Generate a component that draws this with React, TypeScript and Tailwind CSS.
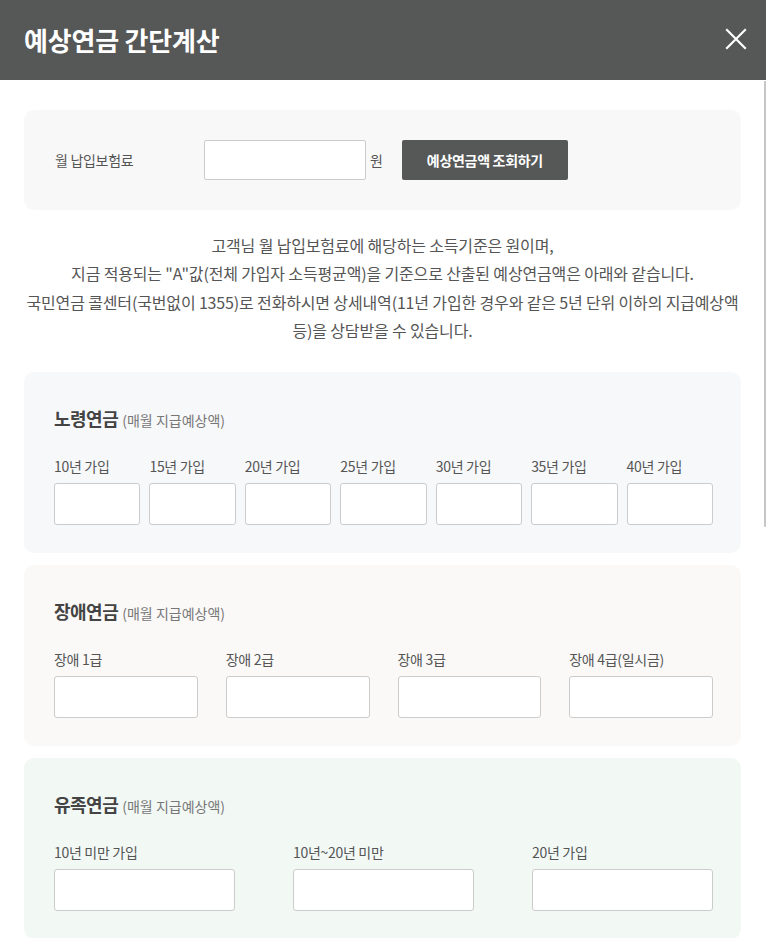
import React from "react";

const font = { fontFamily: '"Noto Sans CJK KR", "Noto Sans", sans-serif' };

function Field({ label }: { label: string }) {
  return (
    <div className="flex flex-col">
      <div className="text-[14px] leading-[20px] tracking-[-0.3px] text-[#555] whitespace-nowrap">{label}</div>
      <div className="mt-[7px] h-[42px] bg-white border border-[#cccccc] rounded-[3px]" />
    </div>
  );
}

function Section({
  title,
  bg,
  cols,
  labels,
}: {
  title: string;
  bg: string;
  cols: string;
  labels: string[];
}) {
  return (
    <div className={`rounded-[10px] pl-[30px] pr-[28px] pt-[34px] pb-[28px] ${bg}`}>
      <div className="flex items-baseline leading-[24px]">
        <span className="text-[18px] font-bold text-[#444] tracking-[-0.5px]">{title}</span>
        <span className="ml-[4px] text-[14px] text-[#777]">(매월 지급예상액)</span>
      </div>
      <div className={`mt-[24px] grid ${cols}`}>
        {labels.map((l) => (
          <Field key={l} label={l} />
        ))}
      </div>
    </div>
  );
}

export default function App() {
  return (
    <div className="relative w-[766px] bg-white" style={font}>
      <div className="h-[80px] bg-[#565857] flex items-center justify-between pl-[24px] pr-[18px]">
        <h1 className="text-[26px] font-bold text-white tracking-[-0.2px] leading-none">예상연금 간단계산</h1>
        <svg width="24" height="24" viewBox="0 0 24 24" className="mt-[-2px]">
          <path d="M3 3 L21 21 M21 3 L3 21" stroke="white" strokeWidth="2.2" strokeLinecap="square" />
        </svg>
      </div>

      <div className="px-[24px] pt-[30px] pr-[25px]">
        <div className="rounded-[10px] bg-[#f8f8f8] h-[100px] flex items-center pl-[31px]">
          <div className="w-[149px] text-[14px] tracking-[-0.3px] text-[#555]">월 납입보험료</div>
          <div className="w-[162px] h-[40px] bg-white border border-[#cccccc] rounded-[2px]" />
          <span className="ml-[4px] text-[14px] text-[#555]">원</span>
          <button className="ml-[19px] w-[166px] h-[40px] bg-[#565857] rounded-[2px] text-white text-[14px] font-bold tracking-[-0.3px]">
            예상연금액 조회하기
          </button>
        </div>

        <p className="mt-[21px] text-center text-[16px] leading-[28.3px] tracking-[-0.15px] text-[#555]">
          고객님 월 납입보험료에 해당하는 소득기준은 원이며,
          <br />
          지금 적용되는 "A"값(전체 가입자 소득평균액)을 기준으로 산출된 예상연금액은 아래와 같습니다.
          <br />
          국민연금 콜센터(국번없이 1355)로 전화하시면 상세내역(11년 가입한 경우와 같은 5년 단위 이하의 지급예상액 등)을 상담받을 수 있습니다.
        </p>

        <div className="mt-[28px] flex flex-col gap-[12px]">
          <Section
            title="노령연금"
            bg="bg-[#f7f8fa]"
            cols="grid-cols-7 gap-x-[9px]"
            labels={["10년 가입", "15년 가입", "20년 가입", "25년 가입", "30년 가입", "35년 가입", "40년 가입"]}
          />
          <Section
            title="장애연금"
            bg="bg-[#faf9f8]"
            cols="grid-cols-4 gap-x-[28px]"
            labels={["장애 1급", "장애 2급", "장애 3급", "장애 4급(일시금)"]}
          />
          <Section
            title="유족연금"
            bg="bg-[#f2f9f5]"
            cols="grid-cols-3 gap-x-[58px]"
            labels={["10년 미만 가입", "10년~20년 미만", "20년 가입"]}
          />
        </div>
      </div>

      <div className="absolute right-0 top-[81px] w-[2px] h-[446px] bg-[#c6c6c6] rounded-b-full" />
    </div>
  );
}
